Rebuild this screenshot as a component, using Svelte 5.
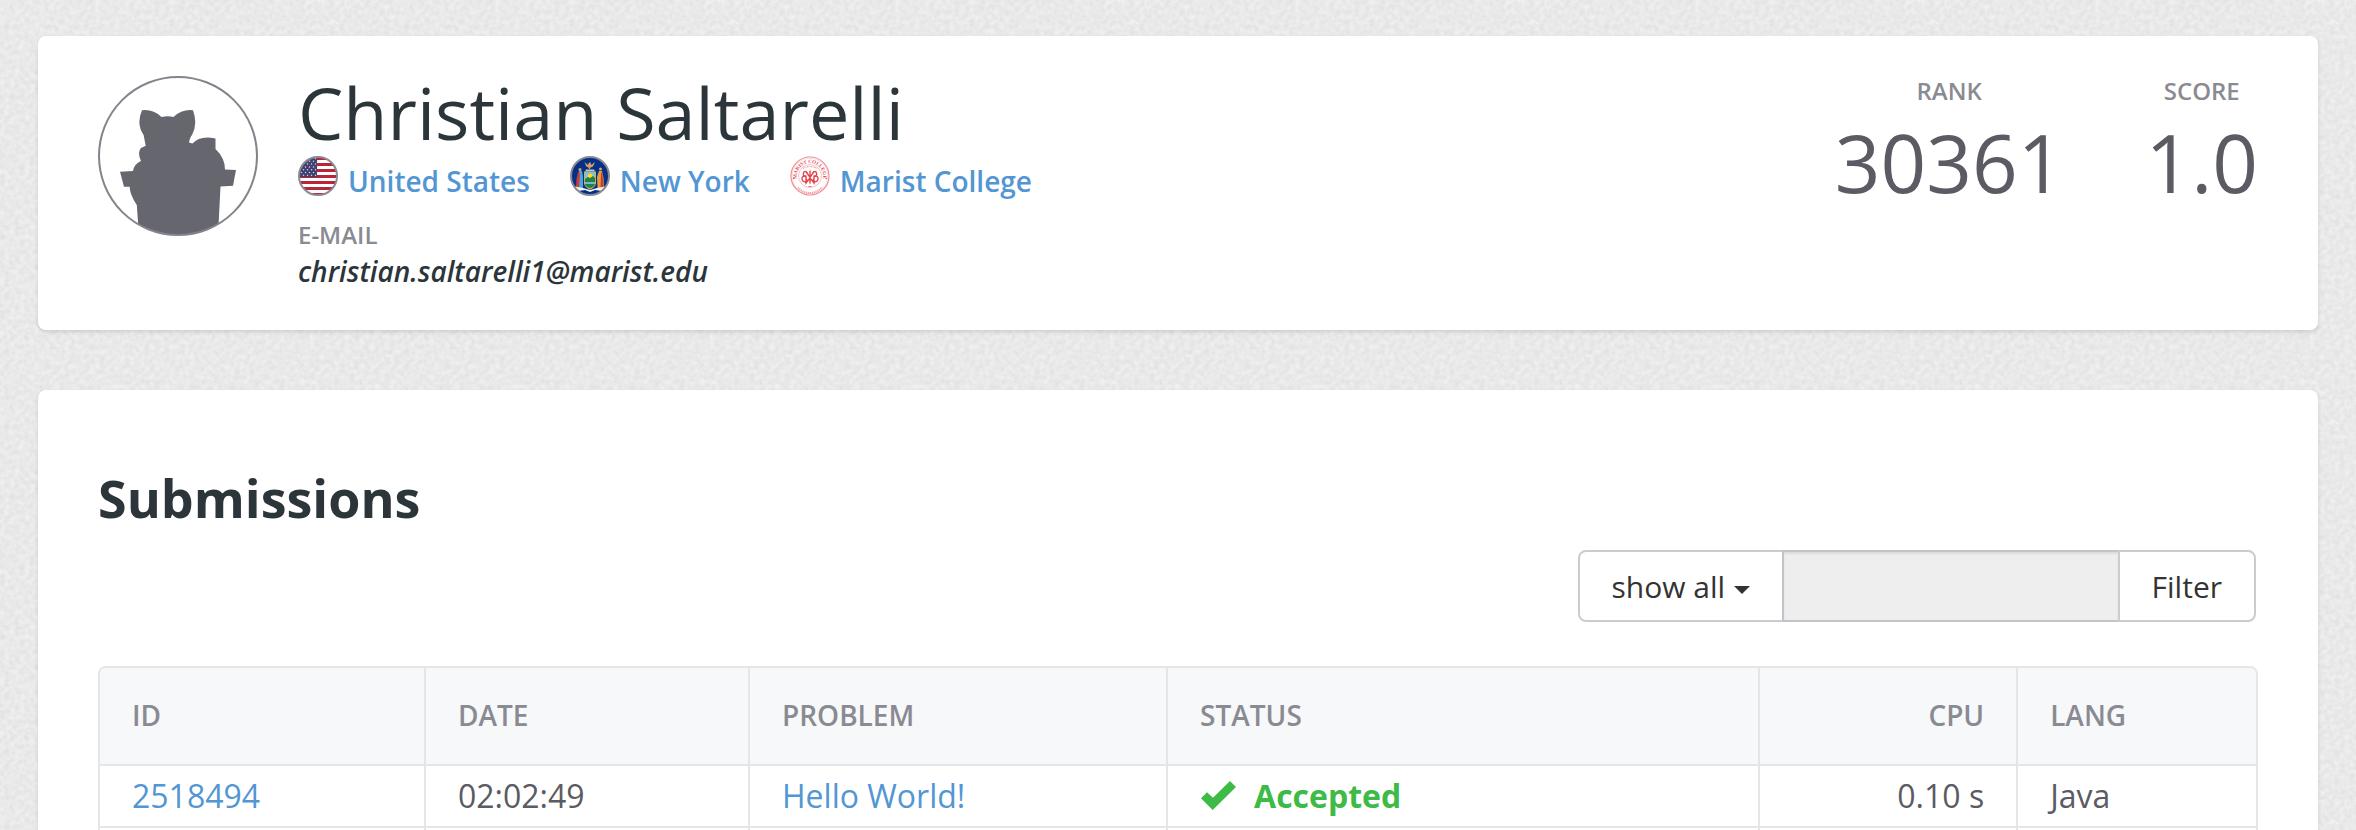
<script>
  const affiliations = [
    { id: 'us', name: 'United States' },
    { id: 'ny', name: 'New York' },
    { id: 'marist', name: 'Marist College' }
  ];
  const stats = [
    { label: 'Rank', value: '30361' },
    { label: 'Score', value: '1.0' }
  ];
  const submissions = [
    { id: '2518494', date: '02:02:49', problem: 'Hello World!', status: 'Accepted', cpu: '0.10 s', lang: 'Java' }
  ];
  const starRows = [0, 1, 2, 3, 4, 5, 6];
  const starCols = [0, 1, 2, 3, 4];
</script>

{#snippet emblem(id)}
  <svg class="emblem" viewBox="0 0 40 40" aria-hidden="true">
    <defs><clipPath id={`clip-${id}`}><circle cx="20" cy="20" r="19" /></clipPath></defs>
    {#if id === 'us'}
      <g clip-path={`url(#clip-${id})`}>
        <rect width="40" height="40" fill="#fff" />
        {#each starRows as i}
          <rect y={1 + i * 6} width="40" height="3" fill="#b92538" />
        {/each}
        <rect width="19" height="21" fill="#3f3f70" />
        {#each starRows as r}
          {#each starCols as c}
            <circle cx={1.5 + c * 4 + (r % 2) * 2} cy={2.5 + r * 2.8} r="0.75" fill="#d4d4e2" />
          {/each}
        {/each}
      </g>
      <circle cx="20" cy="20" r="19" fill="none" stroke="#8a8a92" stroke-width="2" />
    {:else if id === 'ny'}
      <g clip-path={`url(#clip-${id})`}>
        <rect width="40" height="40" fill="#063085" />
        <path d="M14.500 6l3.500 3 1-2.500h1.500l.8 2.500 3.700-3-2 4.500-2.500 1-.5 1.500h-1l-.5-1.500-2.200-1z" fill="#d9a066" />
        <path d="M16 13.500h8l1 2H15z" fill="#b8c5d9" />
        <path d="M14 15.500h12v12q-1 4-6 6-5-2-6-6z" fill="#c9b15a" />
        <path d="M15 16.500h10v6H15z" fill="#79c3df" />
        <circle cx="20" cy="20" r="2.500" fill="#ffd92e" />
        <path d="M15 23l3-2 2 1 3-2 2 2v6q-1 3-5 4-4-1-5-4z" fill="#238241" />
        <path d="M15 26h10v2H15z" fill="#77b7d5" />
        <circle cx="10" cy="13.500" r="1.500" fill="#d5a276" />
        <path d="M9 15h3l1 6v11H6.500l1-10z" fill="#4fa4d4" />
        <path d="M8 16l2 1-1 15H6l.5-9z" fill="#c73d3b" />
        <circle cx="30.500" cy="13" r="1.500" fill="#d5a276" />
        <path d="M29 15h3l1.500 7 .5 10h-6.500l-.5-11z" fill="#e59a3b" />
        <path d="M31 16l1.500 2 1 14h-3z" fill="#ca3c36" />
        <path d="M5 30.500l8 1.500 7 2 7-2 8-1.500-3 4.500-7-1-5 2-5-2-7 1z" fill="#f4f3ef" />
      </g>
      <circle cx="20" cy="20" r="19" fill="none" stroke="#8a8a92" stroke-width="2" />
    {:else}
      <circle cx="20" cy="20" r="19" fill="#fff" stroke="#ef8e93" stroke-width="1.200" />
      <circle cx="20" cy="20" r="17.800" fill="none" stroke="#f7c5c8" stroke-width="0.600" />
      <circle cx="20" cy="20" r="11.500" fill="none" stroke="#f3a5aa" stroke-width="0.700" />
      <path id="seal-top" d="M7.200 23.500A13.200 13.200 0 1 1 32.800 23.500" fill="none" />
      <text class="seal"><textPath href="#seal-top" startOffset="50%" text-anchor="middle">MARIST COLLEGE</textPath></text>
      <path d="M8 31.500A16 16 0 0 0 32 31.500" fill="none" stroke="#f2a0a5" stroke-width="2" stroke-dasharray="1.200 0.700" />
      <path d="M13 12.500Q20 8.500 27 12.500" fill="none" stroke="#f2a0a5" stroke-width="1.200" stroke-dasharray="0.900 0.500" />
      <g fill="none" stroke="#e2474f" stroke-width="1.400" stroke-linecap="round">
        <path d="M20 15v12M17.500 17q-3-3-4 0t2 3q-4 0-3.500 3t3.500 3q2-1 1-3M22.500 17q3-3 4 0t-2 3q4 0 3.500 3t-3.500 3q-2-1-1-3M16 15.500l4 6 4-6M16 20v7l4-5 4 5v-7" />
      </g>
      <path d="M18.500 30.500h3" stroke="#e8777c" stroke-width="1" />
      <circle cx="3.800" cy="22.500" r="0.700" fill="#e2474f" />
      <circle cx="36.200" cy="22.500" r="0.700" fill="#e2474f" />
    {/if}
  </svg>
{/snippet}

<main class="page">
  <section class="card profile">
    <svg class="avatar" viewBox="0 0 160 160" role="img" aria-label="Avatar">
      <defs><clipPath id="clip-avatar"><circle cx="80" cy="80" r="79" /></clipPath></defs>
      <path
        clip-path="url(#clip-avatar)"
        fill="#66666e"
        d="M44 34.300Q55 33 63.500 41Q70 39.500 75.500 41Q84 33 95 34.300Q100 48 94 59Q92 61 91 66.500L94.500 67.500Q102 59 117.500 62.500V73Q127 82 127 93.500L138 94L135 109.700L122.500 110.500L120 160H41L38.800 129Q32 119 31.600 110.700H26L22 95.700L35 95Q36 88 43 85Q39 76 43 72L47.700 69.700L45.600 59Q38 48 44 34.300Z"
      />
      <circle cx="80" cy="80" r="79" fill="none" stroke="#83838b" stroke-width="2" />
    </svg>

    <div class="info">
      <h1>Christian Saltarelli</h1>
      <ul class="affiliations">
        {#each affiliations as item}
          <li>
            {@render emblem(item.id)}
            <a href={`#${item.id}`}>{item.name}</a>
          </li>
        {/each}
      </ul>
      <div class="label email-label">E-mail</div>
      <div class="email">christian.saltarelli1@marist.edu</div>
    </div>

    <div class="stats">
      {#each stats as stat}
        <div class="stat">
          <div class="label">{stat.label}</div>
          <div class="value">{stat.value}</div>
        </div>
      {/each}
    </div>
  </section>

  <section class="card submissions">
    <h2>Submissions</h2>

    <form class="filter" onsubmit={(e) => e.preventDefault()}>
      <select aria-label="Filter by">
        <option>show all</option>
      </select>
      <input type="text" aria-label="Filter value" disabled />
      <button type="submit">Filter</button>
    </form>

    <table>
      <colgroup>
        <col class="c-id" /><col class="c-date" /><col class="c-problem" />
        <col class="c-status" /><col class="c-cpu" /><col />
      </colgroup>
      <thead>
        <tr>
          <th>ID</th><th>Date</th><th>Problem</th><th>Status</th><th class="num">CPU</th><th>Lang</th>
        </tr>
      </thead>
      <tbody>
        {#each submissions as s}
          <tr>
            <td><a href={`#${s.id}`}>{s.id}</a></td>
            <td>{s.date}</td>
            <td><a href="#problem">{s.problem}</a></td>
            <td>
              <span class="accepted">
                <svg viewBox="0 0 36 30" aria-hidden="true"><path d="M1 17.300L7 11.300L13 16.700L30 0L36 6L12.700 29Z" fill="#3dbb46" /></svg>
                {s.status}
              </span>
            </td>
            <td class="num">{s.cpu}</td>
            <td>{s.lang}</td>
          </tr>
        {/each}
        <tr><td></td><td></td><td></td><td></td><td></td><td></td></tr>
      </tbody>
    </table>
  </section>
</main>

<style>
  :global(body) {
    margin: 0;
    font-family: "Open Sans", "Noto Sans", sans-serif;
    color: #5b5b64;
    background-color: #e9e9e9;
    background-image: url("data:image/svg+xml,%3Csvg xmlns='http://www.w3.org/2000/svg' width='400' height='400'%3E%3Cfilter id='n' x='0' y='0' width='100%25' height='100%25' color-interpolation-filters='sRGB'%3E%3CfeTurbulence type='fractalNoise' baseFrequency='.2' numOctaves='2' stitchTiles='stitch'/%3E%3CfeColorMatrix values='.09 0 0 0 .869 .09 0 0 0 .869 .09 0 0 0 .869 0 0 0 0 1'/%3E%3C/filter%3E%3Crect width='400' height='400' filter='url(%23n)'/%3E%3C/svg%3E");
  }
  * {
    box-sizing: border-box;
  }
  h1, h2, ul {
    margin: 0;
    padding: 0;
  }
  a {
    color: #5296d3;
    text-decoration: none;
  }
  .page {
    height: 100vh;
    overflow: hidden;
    padding: 36px 38px 0;
    display: flex;
    flex-direction: column;
    gap: 60px;
  }
  .card {
    flex: none;
    background: #fff;
    border-radius: 8px;
    box-shadow: 0 2px 4px rgba(0, 0, 0, 0.12);
  }
  .profile {
    display: flex;
    gap: 40px;
    padding: 40px 60px 38px;
  }
  .avatar {
    flex: none;
    width: 160px;
    height: 160px;
  }
  .info {
    flex: 1;
  }
  h1 {
    font-size: 72px;
    line-height: 72px;
    font-weight: 400;
    color: #2b353a;
  }
  .affiliations {
    display: flex;
    gap: 40px;
    margin-top: 8px;
    list-style: none;
    font-size: 28px;
    line-height: 50px;
    font-weight: 600;
  }
  .affiliations li {
    display: flex;
    align-items: flex-start;
    gap: 10px;
  }
  .emblem {
    width: 40px;
    height: 40px;
  }
  .seal {
    font: 700 5px "Liberation Serif", serif;
    fill: #e2474f;
  }
  .label {
    font-size: 24px;
    line-height: 30px;
    font-weight: 600;
    color: #8a8a92;
    text-transform: uppercase;
  }
  .email-label {
    margin-top: 14px;
  }
  .email {
    font-size: 28px;
    line-height: 42px;
    font-weight: 600;
    font-style: italic;
    color: #2b353a;
  }
  .stats {
    display: flex;
    gap: 82px;
    text-align: center;
  }
  .value {
    margin-top: 16px;
    font-size: 80px;
    line-height: 80px;
  }
  .submissions {
    padding: 76px 60px 60px;
  }
  h2 {
    font-size: 52px;
    line-height: 64px;
    font-weight: 700;
    color: #2b353a;
  }
  .filter {
    display: flex;
    justify-content: flex-end;
    margin: 20px 2px 44px 0;
  }
  .filter select,
  .filter button,
  .filter input {
    height: 72px;
    margin: 0;
    padding: 0 32px;
    border: 2px solid #cbcccd;
    font-family: inherit;
    font-size: 30px;
    color: #333;
    background-color: #fff;
  }
  .filter select {
    appearance: none;
    padding-right: 56px;
    border-radius: 8px 0 0 8px;
    background-image: url("data:image/svg+xml,%3Csvg xmlns='http://www.w3.org/2000/svg' viewBox='0 0 16 8'%3E%3Cpath d='M0 0h16L8 8z' fill='%23333'/%3E%3C/svg%3E");
    background-repeat: no-repeat;
    background-size: 16px 8px;
    background-position: right 32px top 34px;
  }
  .filter input {
    width: 338px;
    margin: 0 -2px;
    border-color: #c1c5ca;
    background-color: #eee;
    box-shadow: inset 0 2px 2px rgba(0, 0, 0, 0.075);
  }
  .filter button {
    border-radius: 0 8px 8px 0;
  }
  table {
    width: 100%;
    table-layout: fixed;
    border: 2px solid #e6e6e6;
    border-radius: 8px;
    border-collapse: separate;
    border-spacing: 0;
    overflow: hidden;
  }
  .c-id { width: 15.12%; }
  .c-date { width: 15.03%; }
  .c-problem { width: 19.39%; }
  .c-status { width: 27.46%; }
  .c-cpu { width: 11.97%; }
  th,
  td {
    border-right: 2px solid #e6e6e6;
    border-bottom: 2px solid #e6e6e6;
    text-align: left;
  }
  th:last-child,
  td:last-child {
    border-right: 0;
  }
  th {
    padding: 28px 32px 30px;
    font-size: 28px;
    line-height: 38px;
    font-weight: 600;
    color: #8a8a92;
    text-transform: uppercase;
    background: #f7f8fa;
  }
  td {
    height: 62px;
    padding: 8px 32px;
    font-size: 32px;
    line-height: 44px;
  }
  .num {
    text-align: right;
  }
  .accepted {
    display: flex;
    align-items: center;
    gap: 18px;
    font-weight: 700;
    color: #3dbb46;
  }
  .accepted svg {
    width: 36px;
    height: 30px;
  }
</style>
